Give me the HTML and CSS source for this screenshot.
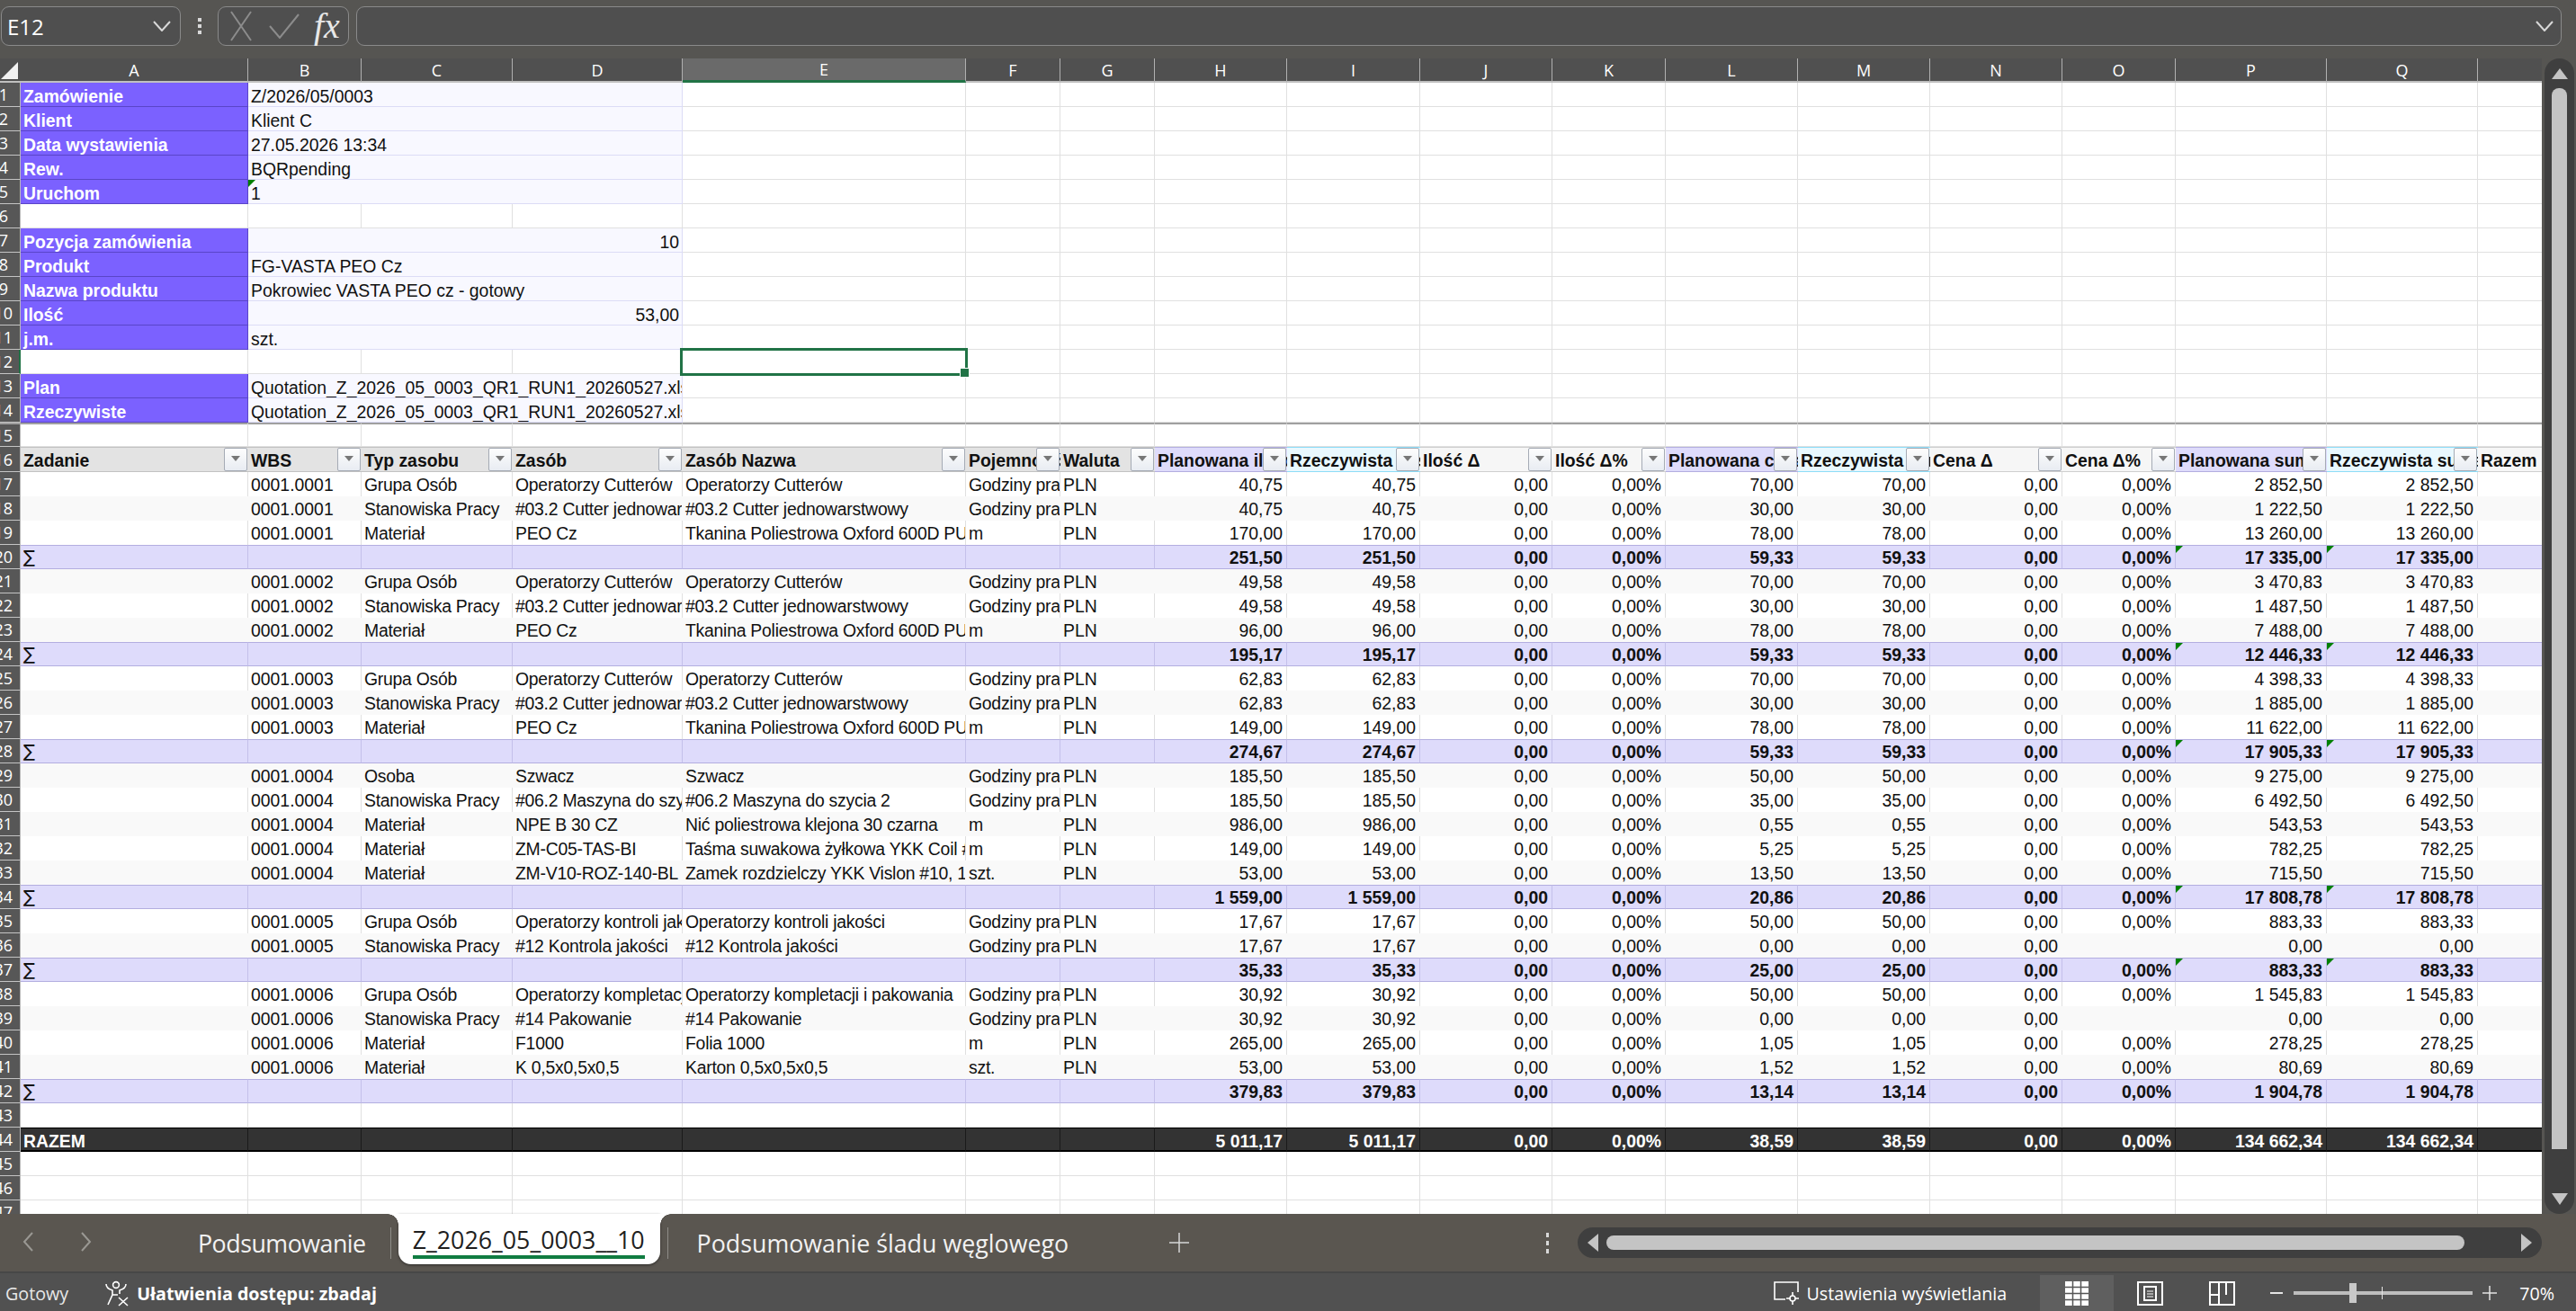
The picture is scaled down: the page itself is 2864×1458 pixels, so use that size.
FILE: index.html
```html
<!DOCTYPE html>
<html lang="pl">
<head>
    <meta charset="UTF-8">
    <title>Z_2026_05_0003__10</title>
    <link rel="stylesheet" href="styles.css">
</head>
<body>
    <!-- pasek formuly -->
    <div class="formula-bar">
        <div class="name-box">
            <span>E12</span>
            <svg width="20" height="12" viewBox="0 0 20 12"><path d="M1 1l9 10 9-10" fill="none" stroke="#d8d8d8" stroke-width="2"/></svg>
        </div>
        <div class="dots"><i></i><i></i><i></i></div>
        <div class="fx-group">
            <svg width="26" height="36" viewBox="0 0 26 36"><path d="M2 2l22 32M24 2L2 34" fill="none" stroke="#8c8c8c" stroke-width="2"/></svg>
            <svg width="34" height="28" viewBox="0 0 34 28"><path d="M1 14l11 13L33 1" fill="none" stroke="#8c8c8c" stroke-width="2"/></svg>
            <span class="fx">fx</span>
        </div>
        <div class="formula-input">
            <svg width="20" height="12" viewBox="0 0 20 12"><path d="M1 1l9 10 9-10" fill="none" stroke="#d8d8d8" stroke-width="2"/></svg>
        </div>
    </div>

    <div class="sheet">
        <div class="grid">
            <table>
                <colgroup>
                    <col class="w23"><col class="w253"><col class="w126"><col class="w168"><col class="w189"><col class="w315"><col class="w105"><col class="w105"><col class="w147"><col class="w148"><col class="w147"><col class="w126"><col class="w147"><col class="w147"><col class="w147"><col class="w126"><col class="w168"><col class="w168"><col class="w168">
                </colgroup>
                <tr class="cols"><th class="corner"><th>A<th>B<th>C<th>D<th class="on">E<th>F<th>G<th>H<th>I<th>J<th>K<th>L<th>M<th>N<th>O<th>P<th>Q<th>R
                <tr><th class="one">1<td class="lbl">Zamówienie<td class="val" colspan="3">Z/2026/05/0003<td><td><td><td><td><td><td><td><td><td><td><td><td><td>
                <tr><th class="one">2<td class="lbl">Klient<td class="val" colspan="3">Klient C<td><td><td><td><td><td><td><td><td><td><td><td><td><td>
                <tr><th class="one">3<td class="lbl">Data wystawienia<td class="val" colspan="3">27.05.2026 13:34<td><td><td><td><td><td><td><td><td><td><td><td><td><td>
                <tr><th class="one">4<td class="lbl">Rew.<td class="val" colspan="3">BQRpending<td><td><td><td><td><td><td><td><td><td><td><td><td><td>
                <tr><th class="one">5<td class="lbl">Uruchom<td class="val flag" colspan="3">1<td><td><td><td><td><td><td><td><td><td><td><td><td><td>
                <tr><th class="one">6<td><td><td><td><td><td><td><td><td><td><td><td><td><td><td><td><td><td>
                <tr><th class="one">7<td class="lbl">Pozycja zamówienia<td class="val num" colspan="3">10<td><td><td><td><td><td><td><td><td><td><td><td><td><td>
                <tr><th class="one">8<td class="lbl">Produkt<td class="val" colspan="3">FG-VASTA PEO Cz<td><td><td><td><td><td><td><td><td><td><td><td><td><td>
                <tr><th class="one">9<td class="lbl">Nazwa produktu<td class="val" colspan="3">Pokrowiec VASTA PEO cz - gotowy<td><td><td><td><td><td><td><td><td><td><td><td><td><td>
                <tr><th>10<td class="lbl">Ilość<td class="val num" colspan="3">53,00<td><td><td><td><td><td><td><td><td><td><td><td><td><td>
                <tr><th>11<td class="lbl">j.m.<td class="val" colspan="3">szt.<td><td><td><td><td><td><td><td><td><td><td><td><td><td>
                <tr><th class="on">12<td><td><td><td><td class="active"><i class="cursor"></i><td><td><td><td><td><td><td><td><td><td><td><td><td>
                <tr><th>13<td class="lbl">Plan<td class="val" colspan="3">Quotation_Z_2026_05_0003_QR1_RUN1_20260527.xlsx<td><td><td><td><td><td><td><td><td><td><td><td><td><td>
                <tr><th>14<td class="lbl">Rzeczywiste<td class="val" colspan="3">Quotation_Z_2026_05_0003_QR1_RUN1_20260527.xlsx<td><td><td><td><td><td><td><td><td><td><td><td><td><td>
                <tr class="split"><th>15<td><td><td><td><td><td><td><td><td><td><td><td><td><td><td><td><td><td>
                <tr class="head"><th>16<td>Zadanie<i class="filter"></i><td>WBS<i class="filter"></i><td>Typ zasobu<i class="filter"></i><td>Zasób<i class="filter"></i><td>Zasób Nazwa<i class="filter"></i><td>Pojemność<i class="filter"></i><td>Waluta<i class="filter"></i><td class="plan">Planowana ilość<i class="filter"></i><td class="real">Rzeczywista ilość<i class="filter"></i><td class="delta">Ilość Δ<i class="filter"></i><td class="delta">Ilość Δ%<i class="filter"></i><td class="plan">Planowana cena<i class="filter"></i><td class="real">Rzeczywista cena<i class="filter"></i><td class="delta">Cena Δ<i class="filter"></i><td class="delta">Cena Δ%<i class="filter"></i><td class="plan">Planowana suma<i class="filter"></i><td class="real">Rzeczywista suma<i class="filter"></i><td class="delta">Razem Δ<i class="filter"></i>
                <tr class="w"><th>17<td><td>0001.0001<td>Grupa Osób<td>Operatorzy Cutterów<td>Operatorzy Cutterów<td>Godziny pracy<td>PLN<td>40,75<td>40,75<td>0,00<td>0,00%<td>70,00<td>70,00<td>0,00<td>0,00%<td>2 852,50<td>2 852,50<td>
                <tr class="g"><th>18<td><td>0001.0001<td>Stanowiska Pracy<td>#03.2 Cutter jednowarstwowy<td>#03.2 Cutter jednowarstwowy<td>Godziny pracy<td>PLN<td>40,75<td>40,75<td>0,00<td>0,00%<td>30,00<td>30,00<td>0,00<td>0,00%<td>1 222,50<td>1 222,50<td>
                <tr class="w"><th>19<td><td>0001.0001<td>Materiał<td>PEO Cz<td>Tkanina Poliestrowa Oxford 600D PU<td>m<td>PLN<td>170,00<td>170,00<td>0,00<td>0,00%<td>78,00<td>78,00<td>0,00<td>0,00%<td>13 260,00<td>13 260,00<td>
                <tr class="s"><th>20<td class="sig">∑<td><td><td><td><td><td><td>251,50<td>251,50<td>0,00<td>0,00%<td>59,33<td>59,33<td>0,00<td>0,00%<td class="flag">17 335,00<td class="flag">17 335,00<td>
                <tr class="g"><th>21<td><td>0001.0002<td>Grupa Osób<td>Operatorzy Cutterów<td>Operatorzy Cutterów<td>Godziny pracy<td>PLN<td>49,58<td>49,58<td>0,00<td>0,00%<td>70,00<td>70,00<td>0,00<td>0,00%<td>3 470,83<td>3 470,83<td>
                <tr class="w"><th>22<td><td>0001.0002<td>Stanowiska Pracy<td>#03.2 Cutter jednowarstwowy<td>#03.2 Cutter jednowarstwowy<td>Godziny pracy<td>PLN<td>49,58<td>49,58<td>0,00<td>0,00%<td>30,00<td>30,00<td>0,00<td>0,00%<td>1 487,50<td>1 487,50<td>
                <tr class="g"><th>23<td><td>0001.0002<td>Materiał<td>PEO Cz<td>Tkanina Poliestrowa Oxford 600D PU<td>m<td>PLN<td>96,00<td>96,00<td>0,00<td>0,00%<td>78,00<td>78,00<td>0,00<td>0,00%<td>7 488,00<td>7 488,00<td>
                <tr class="s"><th>24<td class="sig">∑<td><td><td><td><td><td><td>195,17<td>195,17<td>0,00<td>0,00%<td>59,33<td>59,33<td>0,00<td>0,00%<td class="flag">12 446,33<td class="flag">12 446,33<td>
                <tr class="w"><th>25<td><td>0001.0003<td>Grupa Osób<td>Operatorzy Cutterów<td>Operatorzy Cutterów<td>Godziny pracy<td>PLN<td>62,83<td>62,83<td>0,00<td>0,00%<td>70,00<td>70,00<td>0,00<td>0,00%<td>4 398,33<td>4 398,33<td>
                <tr class="g"><th>26<td><td>0001.0003<td>Stanowiska Pracy<td>#03.2 Cutter jednowarstwowy<td>#03.2 Cutter jednowarstwowy<td>Godziny pracy<td>PLN<td>62,83<td>62,83<td>0,00<td>0,00%<td>30,00<td>30,00<td>0,00<td>0,00%<td>1 885,00<td>1 885,00<td>
                <tr class="w"><th>27<td><td>0001.0003<td>Materiał<td>PEO Cz<td>Tkanina Poliestrowa Oxford 600D PU<td>m<td>PLN<td>149,00<td>149,00<td>0,00<td>0,00%<td>78,00<td>78,00<td>0,00<td>0,00%<td>11 622,00<td>11 622,00<td>
                <tr class="s"><th>28<td class="sig">∑<td><td><td><td><td><td><td>274,67<td>274,67<td>0,00<td>0,00%<td>59,33<td>59,33<td>0,00<td>0,00%<td class="flag">17 905,33<td class="flag">17 905,33<td>
                <tr class="g"><th>29<td><td>0001.0004<td>Osoba<td>Szwacz<td>Szwacz<td>Godziny pracy<td>PLN<td>185,50<td>185,50<td>0,00<td>0,00%<td>50,00<td>50,00<td>0,00<td>0,00%<td>9 275,00<td>9 275,00<td>
                <tr class="w"><th>30<td><td>0001.0004<td>Stanowiska Pracy<td>#06.2 Maszyna do szycia 2<td>#06.2 Maszyna do szycia 2<td>Godziny pracy<td>PLN<td>185,50<td>185,50<td>0,00<td>0,00%<td>35,00<td>35,00<td>0,00<td>0,00%<td>6 492,50<td>6 492,50<td>
                <tr class="g"><th>31<td><td>0001.0004<td>Materiał<td>NPE B 30 CZ<td>Nić poliestrowa klejona 30 czarna<td>m<td>PLN<td>986,00<td>986,00<td>0,00<td>0,00%<td>0,55<td>0,55<td>0,00<td>0,00%<td>543,53<td>543,53<td>
                <tr class="w"><th>32<td><td>0001.0004<td>Materiał<td>ZM-C05-TAS-BI<td>Taśma suwakowa żyłkowa YKK Coil #5<td>m<td>PLN<td>149,00<td>149,00<td>0,00<td>0,00%<td>5,25<td>5,25<td>0,00<td>0,00%<td>782,25<td>782,25<td>
                <tr class="g"><th>33<td><td>0001.0004<td>Materiał<td>ZM-V10-ROZ-140-BL<td>Zamek rozdzielczy YKK Vislon #10, 140<td>szt.<td>PLN<td>53,00<td>53,00<td>0,00<td>0,00%<td>13,50<td>13,50<td>0,00<td>0,00%<td>715,50<td>715,50<td>
                <tr class="s"><th>34<td class="sig">∑<td><td><td><td><td><td><td>1 559,00<td>1 559,00<td>0,00<td>0,00%<td>20,86<td>20,86<td>0,00<td>0,00%<td class="flag">17 808,78<td class="flag">17 808,78<td>
                <tr class="w"><th>35<td><td>0001.0005<td>Grupa Osób<td>Operatorzy kontroli jakości<td>Operatorzy kontroli jakości<td>Godziny pracy<td>PLN<td>17,67<td>17,67<td>0,00<td>0,00%<td>50,00<td>50,00<td>0,00<td>0,00%<td>883,33<td>883,33<td>
                <tr class="g"><th>36<td><td>0001.0005<td>Stanowiska Pracy<td>#12 Kontrola jakości<td>#12 Kontrola jakości<td>Godziny pracy<td>PLN<td>17,67<td>17,67<td>0,00<td>0,00%<td>0,00<td>0,00<td>0,00<td><td>0,00<td>0,00<td>
                <tr class="s"><th>37<td class="sig">∑<td><td><td><td><td><td><td>35,33<td>35,33<td>0,00<td>0,00%<td>25,00<td>25,00<td>0,00<td>0,00%<td class="flag">883,33<td class="flag">883,33<td>
                <tr class="w"><th>38<td><td>0001.0006<td>Grupa Osób<td>Operatorzy kompletacji i pakowania<td>Operatorzy kompletacji i pakowania<td>Godziny pracy<td>PLN<td>30,92<td>30,92<td>0,00<td>0,00%<td>50,00<td>50,00<td>0,00<td>0,00%<td>1 545,83<td>1 545,83<td>
                <tr class="g"><th>39<td><td>0001.0006<td>Stanowiska Pracy<td>#14 Pakowanie<td>#14 Pakowanie<td>Godziny pracy<td>PLN<td>30,92<td>30,92<td>0,00<td>0,00%<td>0,00<td>0,00<td>0,00<td><td>0,00<td>0,00<td>
                <tr class="w"><th>40<td><td>0001.0006<td>Materiał<td>F1000<td>Folia 1000<td>m<td>PLN<td>265,00<td>265,00<td>0,00<td>0,00%<td>1,05<td>1,05<td>0,00<td>0,00%<td>278,25<td>278,25<td>
                <tr class="g"><th>41<td><td>0001.0006<td>Materiał<td>K 0,5x0,5x0,5<td>Karton 0,5x0,5x0,5<td>szt.<td>PLN<td>53,00<td>53,00<td>0,00<td>0,00%<td>1,52<td>1,52<td>0,00<td>0,00%<td>80,69<td>80,69<td>
                <tr class="s"><th>42<td class="sig">∑<td><td><td><td><td><td><td>379,83<td>379,83<td>0,00<td>0,00%<td>13,14<td>13,14<td>0,00<td>0,00%<td>1 904,78<td>1 904,78<td>
                <tr><th>43<td><td><td><td><td><td><td><td><td><td><td><td><td><td><td><td><td><td>
                <tr class="t"><th>44<td>RAZEM<td><td><td><td><td><td><td>5 011,17<td>5 011,17<td>0,00<td>0,00%<td>38,59<td>38,59<td>0,00<td>0,00%<td>134 662,34<td>134 662,34<td>
                <tr><th>45<td><td><td><td><td><td><td><td><td><td><td><td><td><td><td><td><td><td>
                <tr><th>46<td><td><td><td><td><td><td><td><td><td><td><td><td><td><td><td><td><td>
                <tr><th>47<td><td><td><td><td><td><td><td><td><td><td><td><td><td><td><td><td><td>
            </table>
        </div>
        <div class="vscroll">
            <div class="vtrack">
                <i class="arrow-up"></i>
                <i class="vthumb"></i>
                <i class="arrow-down"></i>
            </div>
        </div>
    </div>

    <!-- karty arkuszy -->
    <div class="tabbar">
        <svg class="nav" width="12" height="22" viewBox="0 0 12 22"><path d="M11 1L2 11l9 10" fill="none" stroke="#9a9893" stroke-width="2"/></svg>
        <svg class="nav nav-next" width="12" height="22" viewBox="0 0 12 22"><path d="M1 1l9 10-9 10" fill="none" stroke="#9a9893" stroke-width="2"/></svg>
        <span class="tab first">Podsumowanie</span>
        <i class="tab-sep"></i>
        <span class="tab active"><b>Z_2026_05_0003__10</b></span>
        <i class="tab-sep"></i>
        <span class="tab last">Podsumowanie śladu węglowego</span>
        <svg class="add" width="22" height="22" viewBox="0 0 22 22"><path d="M11 0v22M0 11h22" stroke="#d6d6d6" stroke-width="1.5"/></svg>
        <div class="dots small"><i></i><i></i><i></i></div>
        <div class="hscroll">
            <i class="arrow-left"></i>
            <i class="hthumb"></i>
            <i class="arrow-right"></i>
        </div>
    </div>

    <!-- pasek stanu -->
    <div class="statusbar">
        <span class="ready">Gotowy</span>
        <svg class="a11y" width="29" height="29" viewBox="0 0 29 29" fill="none" stroke="#fff" stroke-width="1.6">
            <circle cx="14" cy="5" r="3.4"/>
            <path d="M3 4c0 5 4 6 7 7v5l-5 11M25 4c0 5-4 6-7 7v4M10 16h6"/>
            <path d="M17 19l10 9M27 19l-10 9"/>
        </svg>
        <b class="a11y-text">Ułatwienia dostępu: zbadaj</b>
        <div class="status-right">
            <svg class="display" width="29" height="26" viewBox="0 0 29 26" fill="none" stroke="#fff" stroke-width="1.6">
                <path d="M13 20H1V1h26v11"/>
                <circle cx="21" cy="19" r="3"/>
                <path d="M21 12v4M21 22v4M14 19h4M24 19h4"/>
            </svg>
            <span class="display-text">Ustawienia wyświetlania</span>
            <div class="view on">
                <svg width="26" height="27" viewBox="0 0 26 27"><rect width="26" height="27" fill="#fff"/><path d="M8.500 0v27M17.500 0v27M0 6.500h26M0 13.500h26M0 20.500h26" stroke="#555" stroke-width="1.500"/></svg>
            </div>
            <div class="view">
                <svg width="29" height="27" viewBox="0 0 29 27"><rect x="1" y="1" width="27" height="25" fill="none" stroke="#fff" stroke-width="2"/><rect x="8" y="6" width="13" height="15" fill="none" stroke="#fff" stroke-width="2"/><path d="M11 11h7M11 14h7M11 17h7" stroke="#fff"/></svg>
            </div>
            <div class="view">
                <svg width="29" height="27" viewBox="0 0 29 27"><rect x="1" y="1" width="27" height="25" fill="none" stroke="#fff" stroke-width="2"/><path d="M11 1v14H1M11 15v11M19 1v14" fill="none" stroke="#fff" stroke-width="2"/></svg>
            </div>
            <div class="zoom">
                <i class="zoom-minus"></i>
                <div class="zoom-line"><i class="zoom-thumb"></i><i class="zoom-mid"></i></div>
                <svg width="16" height="16" viewBox="0 0 16 16"><path d="M8 0v16M0 8h16" stroke="#e4e4e4" stroke-width="1.500"/></svg>
                <span class="zoom-val">70%</span>
            </div>
        </div>
    </div>
</body>
</html>
```

FILE: styles.css
```css
* {
    margin: 0;
    padding: 0;
    box-sizing: border-box;
}

html, body {
    height: 100%;
}

body {
    display: flex;
    flex-direction: column;
    overflow: hidden;
    background: #565552;
    font-family: "Open Sans", "Noto Sans", sans-serif;
    color: #fff;
}

i {
    display: block;
}

/* pasek formuly */
.formula-bar {
    flex: 0 0 65px;
    display: flex;
    padding: 7px 16px 14px 1px;
    background: #565552;
}

.name-box, .fx-group, .formula-input {
    height: 44px;
    background: #4f4f4f;
    border: 1px solid #8a8a8a;
    border-radius: 9px;
    display: flex;
    align-items: center;
}

.name-box {
    width: 200px;
    padding: 0 10px 0 6px;
    justify-content: space-between;
    font-size: 24px;
}

.dots {
    width: 41px;
    display: flex;
    flex-direction: column;
    align-items: center;
    justify-content: center;
    gap: 3px;
    height: 44px;
}

.dots i {
    width: 4px;
    height: 4px;
    background: #d8d8d8;
}

.fx-group {
    width: 146px;
    padding-left: 12px;
}

.fx-group svg + svg {
    margin-left: 18px;
}

.fx {
    margin-left: 16px;
    font: italic 40px "Liberation Serif", serif;
    line-height: 40px;
    color: #e8e8e8;
}

.formula-input {
    flex: 1;
    margin-left: 8px;
    padding-right: 8px;
    justify-content: flex-end;
}

/* arkusz */
.sheet {
    flex: 1;
    min-height: 0;
    display: flex;
}

.grid {
    width: 2826px;
    overflow: hidden;
    background: #fff;
}

table {
    table-layout: fixed;
    width: 2923px;
    border-collapse: separate;
    border-spacing: 0;
    font: 19.4px "Liberation Sans", sans-serif;
    color: #111;
}

.w23 { width: 23px; }
.w105 { width: 105px; }
.w126 { width: 126px; }
.w147 { width: 147px; }
.w148 { width: 148px; }
.w168 { width: 168px; }
.w189 { width: 189px; }
.w253 { width: 253px; }
.w315 { width: 315px; }

tr {
    height: 27px;
}

td {
    position: relative;
    height: 27px;
    padding: 4px 4px 0 3px;
    overflow: hidden;
    white-space: nowrap;
    vertical-align: top;
    line-height: 22px;
    border-right: 1px solid #e0e0e0;
    border-bottom: 1px solid #e0e0e0;
}

th {
    height: 27px;
    overflow: hidden;
    white-space: nowrap;
    font: 400 18px "Open Sans", "Noto Sans", sans-serif;
    line-height: 24px;
    color: #fff;
    background: #575757;
    border-bottom: 1px solid #c4c4c4;
    border-right: 1px solid #b8b8b8;
    direction: rtl;
    text-align: right;
    padding-right: 9px;
}

th.one {
    padding-right: 14px;
}

th.on {
    border-right: 2px solid #217346;
}

/* naglowki kolumn */
.cols th {
    direction: ltr;
    text-align: center;
    padding: 0;
    background: #505050;
    border-right: 1px solid #b0b0b0;
    border-bottom: 2px solid #c0c0c0;
}

.cols th.on {
    background: #6a6a6a;
    border-right: 1px solid #b0b0b0;
    border-bottom: 3px solid #217346;
}

.cols .corner {
    position: relative;
    border-right: 0;
}

.corner::after {
    content: "";
    position: absolute;
    left: 1px;
    bottom: 2px;
    border-left: 19px solid transparent;
    border-bottom: 19px solid #f2f2f2;
}

/* blok informacji */
.lbl {
    background: #7b61ff;
    color: #fff;
    font-weight: bold;
    border-right: 1px solid #5a45c8;
    border-bottom: 1px solid #5a45c8;
}

.val {
    background: #f8f8ff;
    border-right: 1px solid #dcdcf6;
    border-bottom: 1px solid #dcdcf6;
    padding-right: 0;
}

.val.num {
    text-align: right;
    padding-right: 3px;
}

.flag::before {
    content: "";
    position: absolute;
    left: 0;
    top: 0;
    border-top: 8px solid #008000;
    border-right: 8px solid transparent;
}

.active {
    overflow: visible;
}

.cursor {
    position: absolute;
    z-index: 2;
    left: -3px;
    right: -3px;
    top: -2px;
    bottom: -3px;
    border: 3px solid #217346;
}

.cursor::after {
    content: "";
    position: absolute;
    right: -4px;
    bottom: -4px;
    width: 9px;
    height: 9px;
    background: #217346;
    outline: 1px solid #fff;
}

.split td {
    border-top: 2px solid #a0a0a0;
}

.split th {
    border-top: 2px solid #a0a0a0;
    line-height: 22px;
}

/* tabela zasobow */
.head th, .head td {
    height: 28px;
}

.head td {
    font-weight: bold;
    background: #e3e3e3;
    border-top: 1px solid #c2c2c2;
    border-bottom: 1px solid #c2c2c2;
    border-right: 0;
    padding-top: 3px;
}

.head .plan {
    background: #dedbfb;
    border-color: #b3aee0;
}

.head .real {
    background: #e9f8fe;
    border-color: #8ddcf7;
}

.head .delta {
    background: #f6f6f6;
    border-color: #cfcfcf;
}

.filter {
    position: absolute;
    right: 1px;
    top: 0;
    bottom: 0;
    width: 26px;
    border: 1px solid #a5abb5;
    border-radius: 2px;
    background: linear-gradient(#fdfdfd, #e8ecf2);
}

.filter::after {
    content: "";
    position: absolute;
    left: 7px;
    top: 8px;
    border-left: 5px solid transparent;
    border-right: 5px solid transparent;
    border-top: 6px solid #777;
}

.w td, .g td, .s td, .t td {
    border-bottom: 0;
}

.w td, .g td {
    padding-top: 3px;
}

.w td:nth-child(n+9), .g td:nth-child(n+9), .s td:nth-child(n+9), .t td:nth-child(n+9) {
    text-align: right;
}

.w td:nth-child(n+4):nth-child(-n+7), .g td:nth-child(n+4):nth-child(-n+7) {
    letter-spacing: -0.25px;
}

.g td {
    background: #f9f9f9;
    border-right-color: #f9f9f9;
}

.s td {
    padding-top: 2px;
    background: #dedbfb;
    font-weight: bold;
    border-top: 1px solid #b3aee0;
    border-bottom: 1px solid #b3aee0;
    border-right: 1px solid #c4c0ea;
}

.s .sig {
    font-weight: 400;
    font-family: "DejaVu Sans", sans-serif;
}

.t td {
    padding-top: 5px;
    line-height: 19px;
    background: #333;
    color: #fff;
    font-weight: bold;
    border-top: 1px solid #000;
    border-bottom: 2px solid #000;
    border-right: 1px solid #1a1a1a;
}

/* paski przewijania */
.vscroll {
    width: 38px;
    padding: 0 2px 0 3px;
    background: #565552;
}

.vtrack {
    height: 100%;
    display: flex;
    flex-direction: column;
    align-items: center;
    padding: 11px 0 10px;
    background: #3f3f3f;
    border-radius: 17px;
}

.arrow-up, .arrow-down {
    border-left: 9px solid transparent;
    border-right: 9px solid transparent;
}

.arrow-up {
    border-bottom: 12px solid #c4c4c4;
}

.arrow-down {
    margin-top: 49px;
    border-top: 13px solid #c4c4c4;
}

.vthumb {
    flex: 1;
    width: 17px;
    margin-top: 10px;
    background: #c4c4c4;
    border-radius: 8px 8px 0 0;
}

/* karty */
.tabbar {
    flex: 0 0 64px;
    display: flex;
    align-items: center;
    padding-right: 38px;
    background: #5a5650;
    font-size: 26.8px;
}

.nav {
    margin: -2px 0 0 25px;
}

.nav-next {
    margin-left: 53px;
}

.tab {
    white-space: nowrap;
    color: #f2f2f2;
}

.tab.first {
    margin-left: 118px;
    letter-spacing: -0.5px;
}

.tab-sep {
    width: 1px;
    height: 35px;
    margin-left: 27px;
    background: #8f8d88;
}

.tab.active {
    position: relative;
    align-self: flex-start;
    height: 56px;
    margin-left: 8px;
    padding: 12px 17px 0 16px;
    background: #fff;
    color: #1f1f1f;
    border-radius: 0 0 14px 14px;
    box-shadow: 0 1px 3px rgba(0, 0, 0, 0.5);
}

.tab.active + .tab-sep {
    margin-left: 8px;
}

.tab.active b {
    display: block;
    font-weight: 400;
    line-height: 34px;
    border-bottom: 4px solid #107c41;
}

.tab.active::before, .tab.active::after {
    content: "";
    position: absolute;
    top: 0;
    width: 12px;
    height: 12px;
}

.tab.active::before {
    left: -12px;
    background: radial-gradient(circle at 0 100%, transparent 11.500px, #fff 12px);
}

.tab.active::after {
    right: -12px;
    background: radial-gradient(circle at 100% 100%, transparent 11.500px, #fff 12px);
}

.tab.last {
    margin-left: 32px;
}

.add {
    margin-left: 112px;
}

.dots.small {
    width: 4px;
    margin-left: 396px;
    gap: 4px;
}

.dots.small i {
    width: 3px;
    height: 5px;
}

.hscroll {
    flex: 1;
    height: 34px;
    margin-left: 32px;
    display: flex;
    align-items: center;
    padding: 0 11px;
    background: #3f3f3f;
    border-radius: 17px;
}

.arrow-left, .arrow-right {
    border-top: 10px solid transparent;
    border-bottom: 10px solid transparent;
}

.arrow-left {
    border-right: 12px solid #c4c4c4;
}

.arrow-right {
    border-left: 12px solid #c4c4c4;
}

.hthumb {
    flex: 1;
    height: 16px;
    margin: 0 63px 0 9px;
    background: #c4c4c4;
    border-radius: 8px;
}

/* pasek stanu */
.statusbar {
    flex: 0 0 42px;
    display: flex;
    align-items: center;
    padding-top: 2px;
    border-top: 2px solid #474747;
    background: #515151;
    font-size: 19.7px;
}

.ready {
    margin-left: 6px;
    color: #e8e8e8;
}

.a11y {
    margin-left: 39px;
}

.a11y-text {
    margin-left: 8px;
    font-weight: 700;
}

.status-right {
    margin-left: auto;
    display: flex;
    align-items: center;
    height: 100%;
}

.display-text {
    margin: 0 37px 0 7px;
}

.view {
    width: 80px;
    height: 40px;
    display: flex;
    align-items: center;
    justify-content: center;
}

.view.on {
    width: 82px;
    background: #5f5f5f;
}

.zoom {
    display: flex;
    align-items: center;
    margin-left: 14px;
    padding-right: 24px;
}

.zoom-minus {
    width: 14px;
    height: 2px;
    background: #e4e4e4;
}

.zoom-line {
    position: relative;
    width: 199px;
    height: 4px;
    margin: 0 11px 0 12px;
    background: #bdbdbd;
}

.zoom-thumb {
    position: absolute;
    left: 62px;
    top: -9px;
    width: 8px;
    height: 22px;
    background: #c8c8c8;
}

.zoom-mid {
    position: absolute;
    left: 98px;
    top: -5px;
    width: 1px;
    height: 14px;
    background: #e4e4e4;
}

.zoom-val {
    margin-left: 25px;
}
```
